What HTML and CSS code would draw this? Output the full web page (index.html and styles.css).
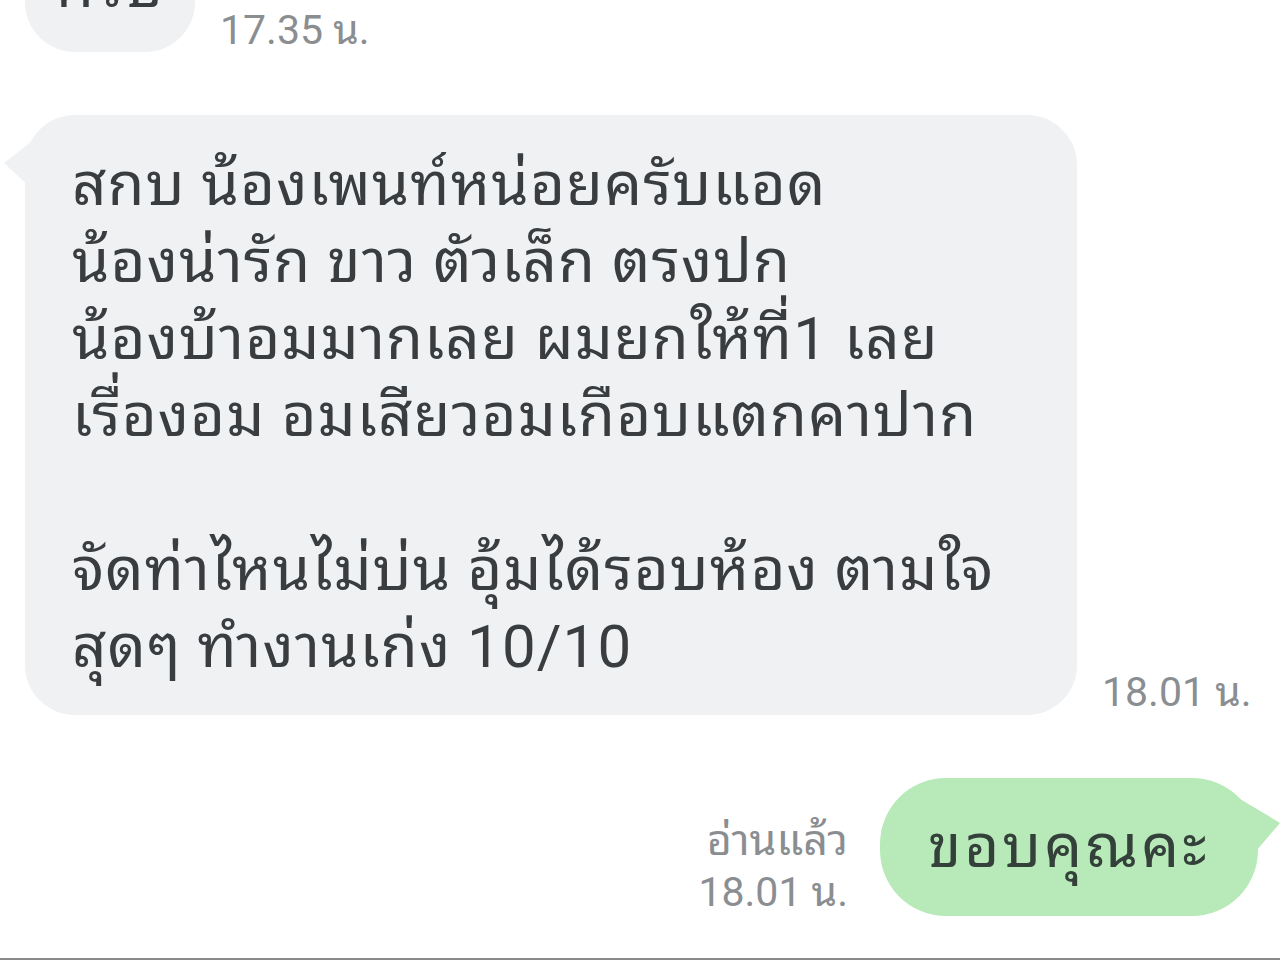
FILE: index.html
```html
<!DOCTYPE html>
<html lang="th">
<head>
<meta charset="utf-8">
<title>Chat</title>
<link rel="stylesheet" href="styles.css">
</head>
<body>
<div class="chat">
  <div class="row row-in row-first">
    <div class="bubble bubble-in bubble-top"><span class="msg">ครับ</span></div>
    <div class="meta"><span class="time">17.35 น.</span></div>
  </div>

  <div class="row row-in row-main">
    <div class="bubble bubble-in bubble-main">
      <p class="msg">สกบ น้องเพนท์หน่อยครับแอด<br>น้องน่ารัก ขาว ตัวเล็ก ตรงปก<br>น้องบ้าอมมากเลย ผมยกให้ที่1 เลย<br>เรื่องอม อมเสียวอมเกือบแตกคาปาก<br><br>จัดท่าไหนไม่บ่น อุ้มได้รอบห้อง ตามใจ<br>สุดๆ ทำงานเก่ง 10/10</p>
    </div>
    <div class="meta"><span class="time">18.01 น.</span></div>
  </div>

  <div class="row row-out">
    <div class="meta meta-out">
      <span class="read">อ่านแล้ว</span>
      <span class="time">18.01 น.</span>
    </div>
    <div class="bubble bubble-out"><p class="msg">ขอบคุณคะ</p></div>
  </div>
</div>
<div class="bottom-rule"></div>
</body>
</html>
```

FILE: styles.css
```css
html, body {
  margin: 0;
  padding: 0;
  background: #ffffff;
  width: 1280px;
  height: 960px;
  overflow: hidden;
}

body {
  font-family: Roboto, "Noto Sans Thai Looped", "Noto Serif Thai", Loma, Garuda, Waree, "Noto Sans Thai", "Noto Sans", sans-serif;
  color: #3a3d40;
  display: flex;
  flex-direction: column;
}

.chat {
  height: 958px;
  display: flex;
  flex-direction: column;
}

.row {
  display: flex;
  align-items: flex-end;
}

.row-in {
  padding-left: 25px;
  gap: 25px;
}

.row-first {
  margin-top: -58px;
}

.row-main {
  margin-top: 63px;
}

.row-out {
  margin-top: 63px;
  justify-content: flex-end;
  padding-right: 22px;
  gap: 32px;
}

.bubble {
  position: relative;
  box-sizing: border-box;
}

.bubble-in {
  background: #eff1f3;
}

.bubble-top {
  width: 170px;
  height: 110px;
  border-radius: 50px;
  display: flex;
  justify-content: center;
  align-items: flex-start;
}

.bubble-top .msg {
  font-size: 60px;
  line-height: 60px;
  margin-top: 15px;
}

.bubble-main {
  width: 1052px;
  height: 600px;
  border-radius: 50px;
  padding: 31px 20px 0 47px;
}

.bubble-main::before {
  content: "";
  position: absolute;
  left: -21px;
  top: 26px;
  width: 28px;
  height: 48px;
  background: #eff1f3;
  clip-path: polygon(0 46%, 100% 0, 100% 100%);
}

.msg {
  margin: 0;
  font-size: 60px;
  line-height: 77px;
  letter-spacing: 1.1px;
  word-spacing: 0;
  color: #3a3d40;
}

.meta {
  display: flex;
  flex-direction: column;
  color: #8b8e91;
  font-size: 41px;
  line-height: 52px;
}

.row-first .meta {
  margin-bottom: -4px;
}

.row-main .meta {
  margin-bottom: -3px;
}

.meta-out {
  align-items: flex-end;
  margin-bottom: -2px;
}

.read {
  font-size: 43px;
  line-height: 52px;
}

.bubble-out {
  background: #b8e9b8;
  width: 378px;
  height: 138px;
  border-radius: 66px;
  display: flex;
  align-items: center;
  padding-left: 48px;
}

.bubble-out::after {
  content: "";
  position: absolute;
  right: -22px;
  top: 18px;
  width: 45px;
  height: 56px;
  background: #b8e9b8;
  clip-path: polygon(0 0, 100% 48%, 45% 100%);
}

.bubble-out .msg {
  line-height: 60px;
  letter-spacing: 3px;
  color: #34403a;
}

.bottom-rule {
  height: 2px;
  background: #8a8a8a;
}
```
